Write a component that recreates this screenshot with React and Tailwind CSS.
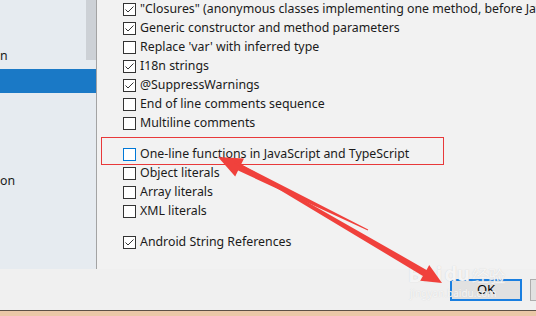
import React from "react";

const rowsA = [
  { t: '"Closures" (anonymous classes implementing one method, before Java 8)', c: true },
  { t: "Generic constructor and method parameters", c: true },
  { t: "Replace 'var' with inferred type", c: false },
  { t: "I18n strings", c: true },
  { t: "@SuppressWarnings", c: true },
  { t: "End of line comments sequence", c: false },
  { t: "Multiline comments", c: false },
];
const rowsB = [
  { t: "One-line functions in JavaScript and TypeScript", c: false, focus: true },
  { t: "Object literals", c: false },
  { t: "Array literals", c: false },
  { t: "XML literals", c: false },
];

function Box({ checked, focus }) {
  return (
    <span
      className={
        "w-[13px] h-[13px] shrink-0 bg-white border flex items-center justify-center " +
        (focus ? "border-[#0078d7]" : "border-[#333333]")
      }
    >
      {checked && (
        <svg width="11" height="11" viewBox="0 0 11 11">
          <path d="M1.5 5.5 L4 8 L9.5 2.5" fill="none" stroke="#333" strokeWidth="1" />
        </svg>
      )}
    </span>
  );
}

function Row({ t, c, focus }) {
  return (
    <div className="h-[19px] flex items-center gap-[4px] whitespace-nowrap">
      <Box checked={c} focus={focus} />
      <span>{t}</span>
    </div>
  );
}

export default function App() {
  return (
    <div
      className="relative w-[536px] h-[316px] overflow-hidden bg-[#f0f0f0] text-[12.35px] text-[#1b1b1b]"
      style={{ fontFamily: '"Noto Sans", "Open Sans", sans-serif' }}
    >
      <div className="flex h-[269px]">
        <div className="relative w-[96px] shrink-0 bg-[#e6ebf0] flex flex-col">
          <div className="h-[46px]" />
          <div className="h-[20px] flex items-center leading-none">n</div>
          <div className="h-[3px]" />
          <div className="h-[24px] bg-[#1a79c6]" />
          <div className="h-[78px]" />
          <div className="h-[20px] flex items-center leading-none">on</div>
          <div className="absolute right-0 top-0 w-[10px] h-[60px] bg-[#cdd1d6]" />
        </div>
        <div className="w-px bg-[#a3a3a3] shrink-0" />
        <div className="flex-1 bg-[#f2f2f2] pl-[26px] overflow-hidden flex flex-col">
          {rowsA.map((r) => (
            <Row key={r.t} {...r} />
          ))}
          <div className="h-[12px]" />
          {rowsB.map((r) => (
            <Row key={r.t} {...r} />
          ))}
          <div className="h-[12px]" />
          <Row t="Android String References" c={true} />
        </div>
      </div>
      <div className="h-[41px] bg-[#f0f0f0] flex justify-end items-start pt-[10px] overflow-hidden">
        <div className="flex gap-[8px] mr-[-66px]">
          <div className="w-[72px] h-[22px] border-2 border-[#1a7fe0] bg-[#e1e1e1] flex items-center justify-center text-[13px] text-black">
            OK
          </div>
          <div className="w-[72px] h-[22px] border border-[#adadad] bg-[#e1e1e1]" />
        </div>
      </div>
      <div className="h-px bg-[#5d5046]" />
      <div className="h-[5px] bg-[#ebc7a7]" />

      {/* annotations */}
      <div className="absolute left-[101px] top-[137px] w-[343px] h-[28px] border border-[#e8393a]" />
      <div className="absolute left-[408px] top-[262px] flex items-end gap-[2px] text-white/80 font-bold text-[22px] leading-none" style={{ textShadow: "0 0 1px #c8c8c8" }}>
        <span>Bai</span>
        <span className="text-[20px]">du</span>
        <span className="text-[17px] font-normal">经验</span>
      </div>
      <div className="absolute left-[410px] top-[288px] text-[10px] text-white/80 leading-none" style={{ textShadow: "0 0 1px #c8c8c8" }}>
        jingyan.baidu.com
      </div>
      <svg className="absolute left-0 top-0" width="536" height="316" viewBox="0 0 536 316">
        <polygon
          fill="#f0413c"
          points="218,157 244,158.5 241.1,164.4 368.2,229.6 367.8,230.4 238.1,170.6 235.2,176.5"
        />
        <polygon
          fill="#f0413c"
          points="235.5,161.1 426.5,269.9 429.2,265.1 442,283 420.2,280.7 422.9,275.9 234.5,162.9"
        />
      </svg>
    </div>
  );
}
